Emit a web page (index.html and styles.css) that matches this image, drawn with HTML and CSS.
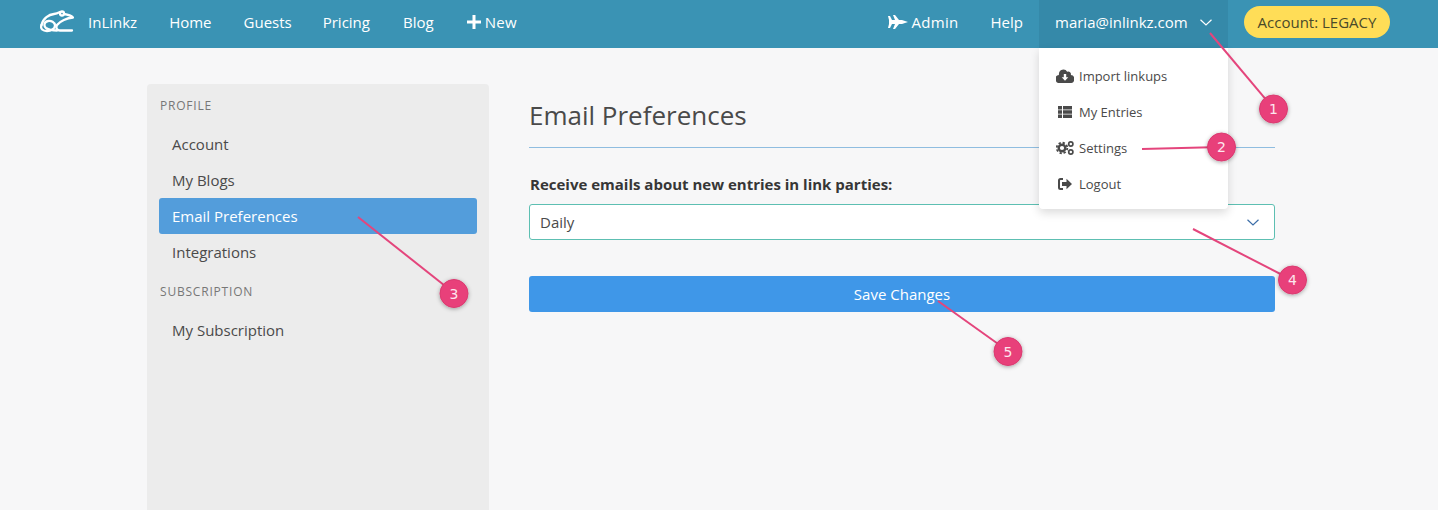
FILE: index.html
```html
<!DOCTYPE html>
<html lang="en">
<head>
    <meta charset="UTF-8">
    <meta name="viewport" content="width=device-width, initial-scale=1.0">
    <title>InLinkz - Email Preferences</title>
    <link rel="stylesheet" href="styles.css">
</head>
<body>
<div class="navbar">
    <a class="brand" href="#">
        <svg class="frog" viewBox="0 0 34 23" width="34" height="23" fill="none" stroke="#fff" stroke-width="2.3" stroke-linecap="round" stroke-linejoin="round">
            <path d="M1.500 15C3 8 9 4.500 14 4C16 3.800 18 3 20 2"/>
            <circle cx="22" cy="3.500" r="2"/>
            <path d="M24 4C27 4.500 31 5.500 33 7.500C27 8 20 11 17 15C15.500 18 17 20.500 20 20.500H32"/>
            <path d="M1.500 15C0 19 3 21 7 21C11 21 15 19 15 15.500C15 12 11 10.500 8 11C4 11.500 3.500 16 6 18C9 20 12 20.500 17 20.500"/>
        </svg>
        InLinkz
    </a>
    <a class="nav-link" href="#">Home</a>
    <a class="nav-link" href="#">Guests</a>
    <a class="nav-link pricing-link" href="#">Pricing</a>
    <a class="nav-link blog-link" href="#">Blog</a>
    <a class="nav-link new-link" href="#">
        <svg viewBox="0 0 14 14" width="14" height="14" fill="#fff"><path d="M5.500 0h3v5.500H14v3H8.500V14h-3V8.500H0v-3h5.500z"/></svg>
        New
    </a>
    <div class="nav-right">
        <a class="nav-link admin-link" href="#">
            <svg viewBox="0 0 20 14" width="20" height="14" fill="#fff"><path d="M0 1h2l2 4h3L5 0h2l4 5h3l6 2-6 2h-3l-4 5H5l2-5H4l-2 4H0l1-4V5z"/></svg>
            Admin
        </a>
        <a class="nav-link" href="#">Help</a>
        <a class="user-toggle" href="#">
            maria@inlinkz.com
            <svg viewBox="0 0 12 7" width="12" height="7" fill="none" stroke="#fff" stroke-width="1.200"><path d="M.5.800 6 6l5.500-5.200"/></svg>
        </a>
        <span class="account-pill">Account: LEGACY</span>
    </div>
</div>

<div class="dropdown">
    <a href="#">
        <span class="drop-icon"><svg viewBox="0 0 18 14" width="18" height="14" fill="#4a4a4a"><path d="M14.800 6.100A2.700 2.700 0 0 0 11.200 2.700 4.500 4.500 0 0 0 2.900 5V6.100A3.900 3.900 0 0 0 4 14H14A3.900 3.900 0 0 0 14.800 6.100ZM9 11.800 5.700 8.200H7.800V5H10.200V8.200H12.300Z" fill-rule="evenodd"/></svg></span>
        Import linkups
    </a>
    <a href="#">
        <span class="drop-icon"><svg viewBox="0 0 14 12" width="14" height="12" fill="#4a4a4a"><path d="M0 0h4v3.500H0zM5 0h9v3.500H5zM0 4.300h4v3.400H0zM5 4.300h9v3.400H5zM0 8.500h4V12H0zM5 8.500h9V12H5z"/></svg></span>
        My Entries
    </a>
    <a href="#">
        <span class="drop-icon"><svg viewBox="0 0 18 14" width="18" height="14" fill="none" stroke="#4a4a4a"><circle cx="6" cy="7" r="5.300" stroke-width="1.800" stroke-dasharray="2.300 1.860"/><circle cx="6" cy="7" r="3.300" stroke-width="2.400"/><circle cx="14.800" cy="3" r="2.100" stroke-width="1.700"/><circle cx="14.800" cy="11" r="2.100" stroke-width="1.700"/></svg></span>
        Settings
    </a>
    <a href="#">
        <span class="drop-icon"><svg viewBox="0 0 14 12" width="14" height="12"><path d="M5 1H2.500A1.500 1.500 0 0 0 1 2.500v7A1.500 1.500 0 0 0 2.500 11H5" fill="none" stroke="#4a4a4a" stroke-width="2"/><path d="M8.500.8 14 6l-5.500 5.200V8H4V4h4.500z" fill="#4a4a4a"/></svg></span>
        Logout
    </a>
</div>

<div class="page">
    <div class="sidebar">
        <div class="side-title">PROFILE</div>
        <a class="side-link" href="#">Account</a>
        <a class="side-link" href="#">My Blogs</a>
        <a class="side-link active" href="#">Email Preferences</a>
        <a class="side-link" href="#">Integrations</a>
        <div class="side-title second">SUBSCRIPTION</div>
        <a class="side-link" href="#">My Subscription</a>
    </div>
    <div class="content">
        <h1>Email Preferences</h1>
        <form>
            <label class="field-label">Receive emails about new entries in link parties:</label>
            <div class="select-box">
                <span>Daily</span>
                <svg viewBox="0 0 12 7" width="12" height="7" fill="none" stroke="#3c6ea8" stroke-width="1.200"><path d="M.5.800 6 6l5.500-5.200"/></svg>
            </div>
            <button type="button" class="save-btn">Save Changes</button>
        </form>
    </div>
</div>

<svg class="callouts" viewBox="0 0 1438 510" width="1438" height="510">
    <defs>
        <filter id="soft" x="-40%" y="-40%" width="180%" height="180%">
            <feDropShadow dx="0" dy="1" stdDeviation="2" flood-color="#000" flood-opacity=".35"/>
        </filter>
    </defs>
    <g stroke="#e4457c" stroke-width="2" fill="none">
        <path d="M1210 33 1273 108"/>
        <path d="M1142 149 1221 147"/>
        <path d="M358 217 454 293"/>
        <path d="M1193 229 1292 280"/>
        <path d="M938 301 1008 351"/>
    </g>
    <g fill="#e8407a" stroke="#da3a70" stroke-width="1" filter="url(#soft)">
        <circle cx="1273.500" cy="109" r="14"/>
        <circle cx="1221.500" cy="147" r="14"/>
        <circle cx="454" cy="293.500" r="14"/>
        <circle cx="1292.500" cy="280" r="14"/>
        <circle cx="1008" cy="351.500" r="14"/>
    </g>
    <g class="callout-num" text-anchor="middle">
        <text x="1273.500" y="114">1</text>
        <text x="1221.500" y="152">2</text>
        <text x="454" y="298.500">3</text>
        <text x="1292.500" y="285">4</text>
        <text x="1008" y="356.500">5</text>
    </g>
</svg>
</body>
</html>
```
FILE: styles.css
```css
* {
    box-sizing: border-box;
}
html, body {
    height: 100%;
}
body {
    font-family: 'Open Sans', 'Noto Sans', sans-serif;
    margin: 0;
    background-color: #f7f7f8;
    color: #4a4a4a;
    overflow: hidden;
    position: relative;
}
a {
    text-decoration: none;
    color: inherit;
}
.navbar {
    display: flex;
    align-items: center;
    height: 48px;
    padding-left: 40px;
    background-color: #3a93b4;
    color: #fff;
    font-size: 15px;
}
.brand {
    display: flex;
    align-items: center;
    gap: 14px;
    height: 48px;
    padding-bottom: 4px;
    margin-right: 16px;
}
.frog {
    margin-top: -1px;
}
.nav-link {
    display: flex;
    align-items: center;
    padding: 0 16px 4px;
    height: 48px;
}
.pricing-link {
    margin-left: -1px;
}
.blog-link {
    margin-left: 1px;
}
.new-link {
    gap: 4px;
    letter-spacing: 0.3px;
    margin-left: 1px;
}
.admin-link {
    gap: 4px;
    letter-spacing: 0.3px;
}
.nav-right {
    display: flex;
    align-items: center;
    margin-left: auto;
    margin-right: 48px;
}
.user-toggle {
    display: flex;
    align-items: center;
    justify-content: space-between;
    width: 189px;
    height: 48px;
    padding: 0 16px 4px;
    background-color: #3589a9;
}
.account-pill {
    display: flex;
    align-items: center;
    justify-content: center;
    width: 146px;
    height: 32px;
    margin: 0 0 4px 16px;
    border-radius: 16px;
    background-color: #ffdd57;
    color: #4a4a2a;
    font-size: 15px;
}
.dropdown {
    position: absolute;
    top: 48px;
    left: 1039px;
    width: 189px;
    padding: 10px 0 7px;
    background-color: #fff;
    border-radius: 0 0 4px 4px;
    box-shadow: 0 4px 10px rgba(0, 0, 0, 0.14);
    font-size: 13px;
    z-index: 5;
}
.dropdown a {
    display: flex;
    align-items: center;
    height: 36px;
    padding-left: 17px;
}
.drop-icon {
    display: flex;
    justify-content: center;
    flex: none;
    width: 18px;
    margin-right: 5px;
}
.page {
    display: flex;
    height: calc(100% - 48px);
    padding: 36px 0 0 147px;
}
.sidebar {
    width: 342px;
    padding: 13px 12px 0;
    background-color: #ececec;
    border-radius: 4px 4px 0 0;
}
.side-title {
    font-size: 12px;
    letter-spacing: 0.8px;
    color: #777;
    height: 18px;
    line-height: 18px;
    margin: 0 0 11px 1px;
}
.side-title.second {
    margin-top: 13px;
}
.side-link {
    display: block;
    height: 36px;
    line-height: 36px;
    padding-left: 13px;
    font-size: 15px;
    border-radius: 3px;
    color: #4a4a4a;
}
.side-link.active {
    background-color: #539ddb;
    color: #fff;
}
.content {
    width: 746px;
    margin-left: 40px;
}
h1 {
    margin: 0;
    height: 64px;
    padding: 12px 0 0;
    line-height: 38px;
    font-size: 26px;
    font-weight: 400;
    color: #4a4a4a;
    border-bottom: 1px solid #8fbde0;
}
.field-label {
    display: block;
    margin-top: 26px;
    padding-left: 1px;
    height: 20px;
    line-height: 20px;
    font-size: 15px;
    font-weight: 700;
    color: #363636;
}
.select-box {
    display: flex;
    align-items: center;
    justify-content: space-between;
    height: 36px;
    margin-top: 10px;
    padding: 0 15px 0 10px;
    background-color: #fff;
    border: 1px solid #5dbfb2;
    border-radius: 3px;
    font-size: 15px;
}
.save-btn {
    display: block;
    width: 100%;
    height: 36px;
    margin-top: 36px;
    border: none;
    border-radius: 3px;
    background-color: #3f97e8;
    color: #fff;
    font-family: inherit;
    font-size: 15px;
}
.callouts {
    position: absolute;
    top: 0;
    left: 0;
    z-index: 10;
    pointer-events: none;
}
.callout-num {
    font-family: 'DejaVu Sans', sans-serif;
    font-size: 14px;
    fill: #fde6ee;
}
```
